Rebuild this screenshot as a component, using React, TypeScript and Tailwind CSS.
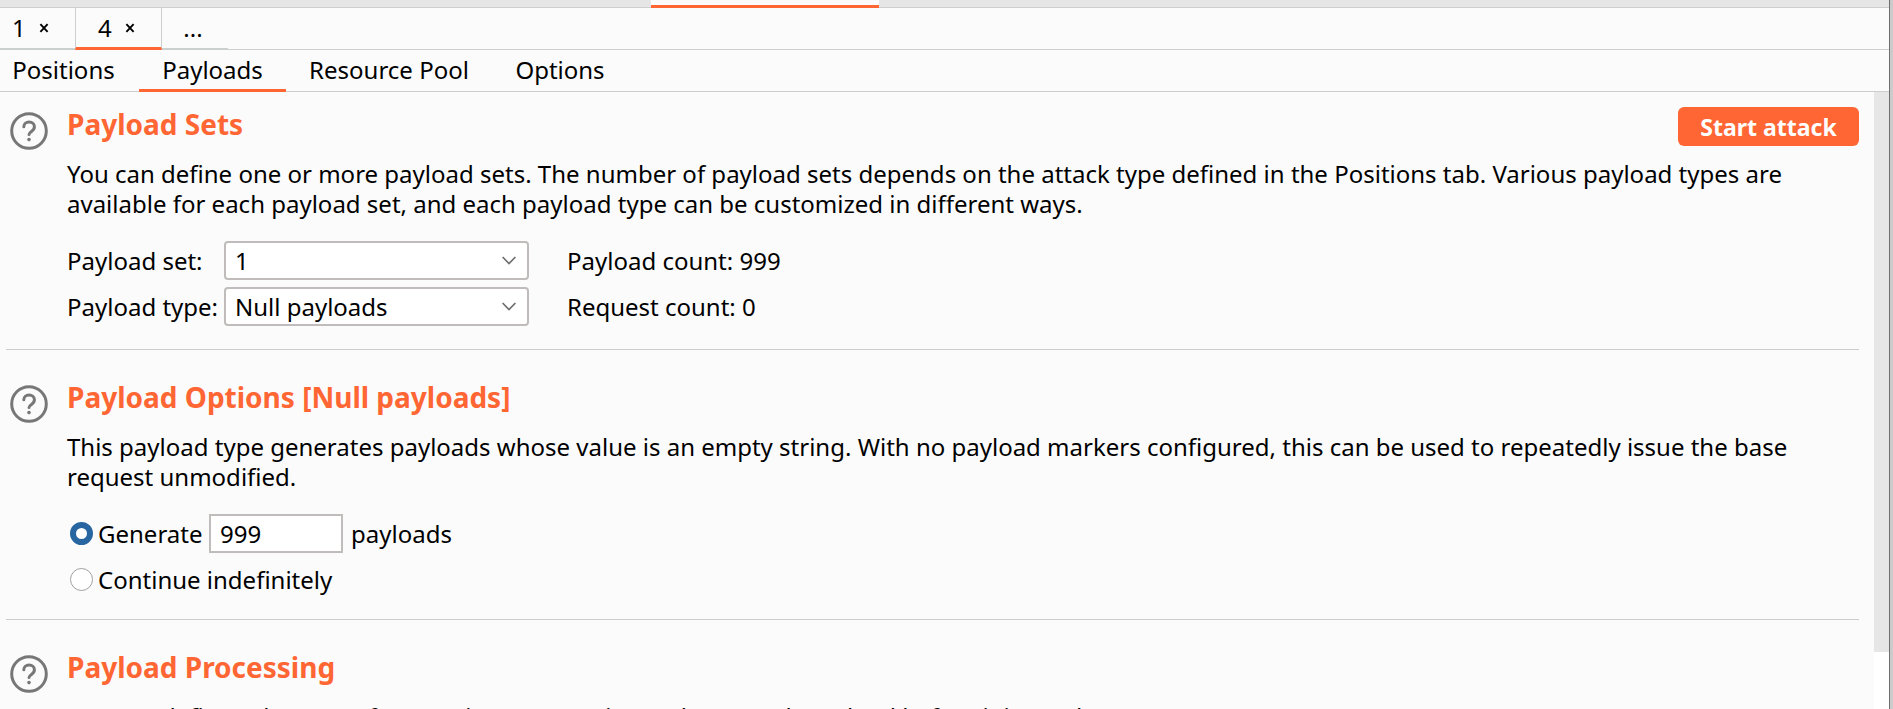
import { useState, type ReactNode } from "react";

function HelpIcon() {
  return (
    <svg viewBox="0 0 38 38" className="size-[38px]" fill="none" stroke="#777777" aria-hidden="true">
      <circle cx="19" cy="19" r="17.3" strokeWidth="3" />
      <path
        d="M13.8 14.8c0-3 2.3-4.7 5.3-4.7 3.1 0 5.3 1.8 5.3 4.6 0 2.3-1.2 3.5-2.9 4.7-1.6 1.1-2.5 1.8-2.5 3.1"
        strokeWidth="3"
        strokeLinecap="round"
      />
      <circle cx="19" cy="27.6" r="1.8" fill="#777777" stroke="none" />
    </svg>
  );
}

function CloseGlyph() {
  return (
    <svg viewBox="0 0 10 10" className="size-[10px]" stroke="#000" strokeWidth="1.9" aria-hidden="true">
      <path d="M1.4 1.2l7.2 7.6M8.6 1.2L1.4 8.8" />
    </svg>
  );
}

function Section({ title, text, action, children }: { title: string; text: string; action?: ReactNode; children?: ReactNode }) {
  return (
    <section className="ml-[6px] mr-[15px] flex border-b border-[#cccccc] pt-[15px] pb-[23px]">
      <button type="button" aria-label={`Help: ${title}`} className="mt-[5px] ml-[4px] h-[38px] w-[38px] shrink-0">
        <HelpIcon />
      </button>
      <div className="ml-[19px] min-w-0 flex-1">
        <div className="flex h-[41px] items-start justify-between">
          <h2 className="text-[28px] leading-[34px] font-bold text-[#ff6633]">{title}</h2>
          {action}
        </div>
        <p className="mt-[11px] mr-[60px] leading-[30px]">{text}</p>
        {children}
      </div>
    </section>
  );
}

function SelectBox({ id, options }: { id: string; options: string[] }) {
  return (
    <div className="grid w-[305px] items-center">
      <select
        id={id}
        className="col-start-1 row-start-1 h-[39px] w-full appearance-none rounded-[4px] border-2 border-[#c0bcbc] bg-white pl-[9px]"
      >
        {options.map((o) => (
          <option key={o}>{o}</option>
        ))}
      </select>
      <svg
        viewBox="0 0 14 9"
        className="pointer-events-none col-start-1 row-start-1 mr-[13px] h-[9px] w-[14px] justify-self-end"
        fill="none"
        stroke="#6e6e6e"
        strokeWidth="1.7"
        aria-hidden="true"
      >
        <path d="M.6 1L7 7.6 13.4 1" />
      </svg>
    </div>
  );
}

const RADIO =
  "size-[23px] shrink-0 appearance-none rounded-full border border-[#a0a0a0] bg-white checked:border-[6px] checked:border-[#2866a2]";

export default function App() {
  const [mode, setMode] = useState("generate");
  const [count, setCount] = useState("999");

  return (
    <div className="flex h-screen overflow-hidden bg-[#fbfbfb] font-['Noto_Sans','Open_Sans',sans-serif] text-[24px] leading-[32px] text-black">
      <div className="flex min-w-0 flex-1 flex-col">
        <div className="h-[8px] shrink-0 border-b border-[#cccfce] bg-[#e6e6e6] pl-[651px]">
          <div className="h-[8px] w-[228px] border-b-[3px] border-[#ff6633] bg-[#fbfbfb]" />
        </div>

        <nav aria-label="Attacks" className="flex h-[42px] shrink-0 border-b border-[#cbcfcd]">
          <div className="flex h-[42px] w-[75px] items-center gap-[13px] border-b-2 border-[#cbcfcd] pl-[12px]">
            <button type="button">1</button>
            <button type="button" aria-label="Close tab 1">
              <CloseGlyph />
            </button>
          </div>
          <div className="flex h-[42px] w-[87px] items-center gap-[13px] border-x border-b-[3px] border-x-[#cbcfcd] border-b-[#ff6633] pl-[22px]">
            <button type="button">4</button>
            <button type="button" aria-label="Close tab 4">
              <CloseGlyph />
            </button>
          </div>
          <button type="button" className="h-[42px] w-[66px] border-b-2 border-[#cbcfcd] pr-[4px]">
            ...
          </button>
        </nav>

        <nav aria-label="Intruder" className="flex h-[42px] shrink-0 border-b border-[#cccfce]">
          <button type="button" className="h-[42px] w-[139px] pr-[12px] pb-[3px]">Positions</button>
          <button type="button" className="h-[42px] w-[147px] border-b-[3px] border-[#ff6633]">Payloads</button>
          <button type="button" className="h-[42px] w-[206px] pb-[3px]">Resource Pool</button>
          <button type="button" className="h-[42px] w-[136px] pb-[3px]">Options</button>
        </nav>

        <div className="flex min-h-0 flex-1">
          <main className="min-w-0 flex-1 overflow-hidden">
            <Section
              title="Payload Sets"
              text="You can define one or more payload sets. The number of payload sets depends on the attack type defined in the Positions tab. Various payload types are available for each payload set, and each payload type can be customized in different ways."
              action={
                <button type="button" className="h-[39px] w-[181px] rounded-[6px] bg-[#ff6633] text-[23px] font-bold text-white">
                  Start attack
                </button>
              }
            >
              <div className="mt-[22px] grid grid-cols-[157px_343px_1fr] items-center gap-y-[7px]">
                <label htmlFor="payload-set">Payload set:</label>
                <SelectBox id="payload-set" options={["1"]} />
                <span>Payload count: 999</span>
                <label htmlFor="payload-type">Payload type:</label>
                <SelectBox id="payload-type" options={["Null payloads", "Simple list", "Numbers"]} />
                <span>Request count: 0</span>
              </div>
            </Section>

            <div className="pt-[15px]">
              <Section
                title="Payload Options [Null payloads]"
                text="This payload type generates payloads whose value is an empty string. With no payload markers configured, this can be used to repeatedly issue the base request unmodified."
              >
                <div className="mt-[22px] ml-[3px] flex h-[39px] items-center">
                  <input id="generate" type="radio" name="mode" className={RADIO} checked={mode === "generate"} onChange={() => setMode("generate")} />
                  <label htmlFor="generate" className="ml-[5px] w-[111px]">Generate</label>
                  <input
                    aria-label="Number of payloads"
                    value={count}
                    onChange={(e) => setCount(e.target.value)}
                    className="h-[39px] w-[134px] border-2 border-[#c0bcbc] bg-white pl-[9px]"
                  />
                  <span className="ml-[8px]">payloads</span>
                </div>
                <div className="mt-[10px] ml-[3px] flex h-[33px] items-center">
                  <input id="continue" type="radio" name="mode" className={RADIO} checked={mode === "continue"} onChange={() => setMode("continue")} />
                  <label htmlFor="continue" className="ml-[5px]">Continue indefinitely</label>
                </div>
              </Section>
            </div>

            <div className="pt-[15px]">
              <Section
                title="Payload Processing"
                text="You can define rules to perform various processing tasks on each payload before it is used."
              />
            </div>
          </main>
          <div className="w-[15px] shrink-0 bg-white">
            <div className="h-[560px] bg-[#e6e6e6]" />
          </div>
        </div>
      </div>
      <div className="w-[4px] shrink-0 border-l border-[#6f6f6f] bg-[#cbcbcb]" />
    </div>
  );
}
